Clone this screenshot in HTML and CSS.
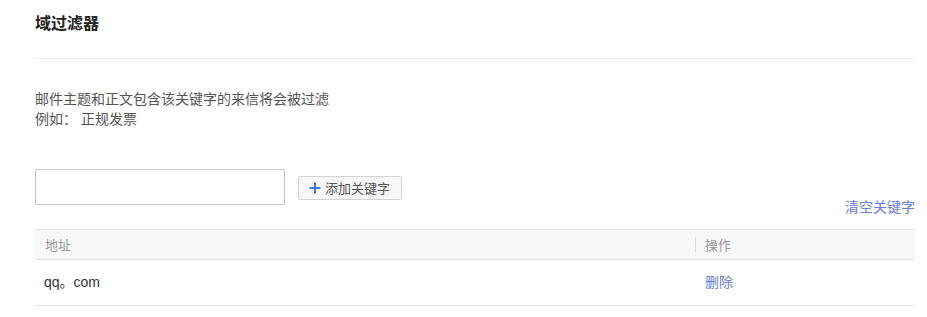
FILE: index.html
```html
<!DOCTYPE html>
<html lang="zh">
<head>
<meta charset="utf-8">
<link rel="stylesheet" href="styles.css">
</head>
<body>
<div class="page">
  <h1 class="title">域过滤器</h1>
  <div class="desc">
    <p>邮件主题和正文包含该关键字的来信将会被过滤</p>
    <p>例如： 正规发票</p>
  </div>
  <div class="add-row">
    <input class="kw-input" type="text">
    <button class="add-btn"><svg width="12" height="12" viewBox="0 0 12 12"><path d="M6 0.5V11.5M0.5 6H11.5" stroke="#3f78e0" stroke-width="2"/></svg>添加关键字</button>
  </div>
  <div class="clear-row"><a class="link">清空关键字</a></div>
  <div class="table">
    <div class="thead">
      <div class="col-addr">地址</div>
      <div class="col-op"><span class="sep"></span>操作</div>
    </div>
    <div class="trow">
      <div class="col-addr addr">qq。com</div>
      <div class="col-op"><a class="link">删除</a></div>
    </div>
  </div>
</div>
</body>
</html>
```

FILE: styles.css
```css
* { box-sizing: border-box; }
html, body { margin: 0; padding: 0; background: #fff; }
body { font-family: "Liberation Sans", "Noto Sans CJK SC", sans-serif; color: #333; }
.page { padding: 0 12px 0 35px; width: 927px; }
.title { margin: 0; font-size: 16px; font-weight: bold; color: #222; height: 59px; line-height: 48px; border-bottom: 1px solid #ebebeb; }
.desc { padding-top: 30px; font-size: 14px; color: #555; line-height: 20px; }
.desc p { margin: 0; }
.add-row { display: flex; align-items: center; gap: 13px; margin-top: 40px; }
.kw-input { width: 250px; height: 36px; border: 1px solid #c8c8c8; border-radius: 2px; margin: 0; padding: 0 8px; font-size: 14px; }
.add-btn { height: 24px; width: 104px; border: 1px solid #d4d4d4; background: #f7f7f7; border-radius: 2px; font-family: inherit; font-size: 13px; color: #555; display: flex; align-items: center; gap: 4px; padding: 0 0 0 10px; margin-top: 1px; }
.clear-row { display: flex; justify-content: flex-end; margin-top: -6px; height: 30px; line-height: 16px; }
.link { color: #6680dc; font-size: 14px; cursor: pointer; }
.table { font-size: 13px; }
.thead { display: flex; height: 31px; align-items: center; background: #f7f8fa; border-top: 1px solid #e3e3e3; border-bottom: 1px solid #e3e3e3; color: #999; font-size: 13px; padding-bottom: 1px; }
.col-addr { flex: 1; padding-left: 10px; }
.col-op { width: 220px; display: flex; align-items: center; }
.sep { width: 1px; height: 15px; background: #ddd; margin-right: 9px; }
.trow { display: flex; height: 46px; align-items: center; border-bottom: 1px solid #e3e3e3; padding-bottom: 3px; }
.trow .col-op { padding-left: 10px; }
.addr { font-size: 14px; color: #333; padding-left: 9px; }
```
